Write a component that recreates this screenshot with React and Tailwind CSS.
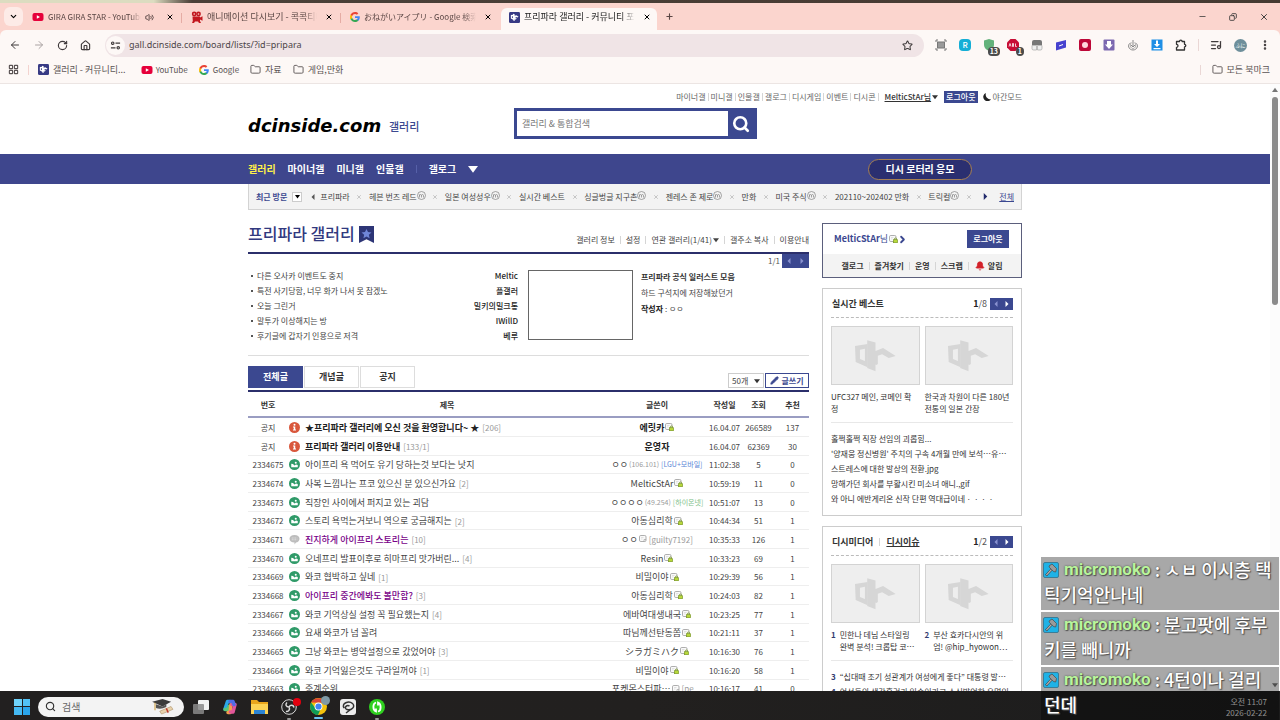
import React from 'react';
import {
  ArrowLeft,
  ArrowRight,
  Bell,
  ChevronDown,
  ChevronRight,
  Copy,
  EllipsisVertical,
  Folder,
  House,
  LayoutGrid,
  ListMusic,
  Minus,
  Pencil,
  Plus,
  RotateCw,
  Search,
  Star,
  Volume2,
  X,
} from 'lucide-react';

/* ---------- data ---------- */

const tabs = [
  { icon: 'youtube', title: 'GIRA GIRA STAR - YouTube', audio: true, latin: true, divider: true },
  { icon: 'camera', title: '애니메이션 다시보기 - 콕콕티비', divider: true },
  { icon: 'google', title: 'おねがいアイプリ - Google 検索', latin: true },
  { icon: 'dc', title: '프리파라 갤러리 - 커뮤니티 포털', active: true },
];

const utilLinks = ['마이너갤', '미니갤', '인물갤', '갤로그', '디시게임', '이벤트', '디시콘'];

const recent = [
  { name: '프리파라' },
  { name: '헤븐 번즈 레드', minor: true },
  { name: '일본 여성성우', minor: true },
  { name: '실시간 베스트' },
  { name: '싱글벙글 지구촌', minor: true },
  { name: '젠레스 존 제로', minor: true },
  { name: '만화' },
  { name: '미국 주식', minor: true },
  { name: '202110~202402 만화' },
  { name: '트릭컬', minor: true },
];

const issues = [
  ['다른 오사카 이벤트도 중지', 'Meltic'],
  ['특전 사기당함, 너무 화가 나서 못 참겠노', '플갤러'],
  ['오늘 그린거', '밀키의밀크통'],
  ['말투가 이상해지는 방', 'IWillD'],
  ['후기글에 갑자기 인용으로 저격', '베루'],
];

const posts = [
  { no: '공지', type: 'notice', title: '★프리파라 갤러리에 오신 것을 환영합니다~ ★', reply: '[206]', writer: '에릿카', badge: 'fixed', date: '16.04.07', views: '266589', up: '137' },
  { no: '공지', type: 'notice', title: '프리파라 갤러리 이용안내', reply: '[133/1]', writer: '운영자', date: '16.04.07', views: '62369', up: '30' },
  { no: '2334675', type: 'pic', title: '아이프리 욕 먹어도 유기 당하는것 보다는 낫지', writer: 'ㅇㅇ', ip: '(106.101)', net: '[LGU+모바일]', netColor: 'text-[#5b86d6]', date: '11:02:38', views: '5', up: '0' },
  { no: '2334674', type: 'pic', title: '사복 느낌나는 프코 있으신 분 있으신가요', reply: '[2]', writer: 'MelticStAr', badge: 'fixed', date: '10:59:19', views: '11', up: '0' },
  { no: '2334673', type: 'pic', title: '직장인 사이에서 퍼지고 있는 괴담', writer: 'ㅇㅇㅇㅇ', ip: '(49.254)', net: '[하이온넷]', netColor: 'text-[#7fbf8c]', date: '10:51:07', views: '13', up: '0' },
  { no: '2334672', type: 'pic', title: '스토리 욕먹는거보니 역으로 궁금해지는', reply: '[2]', writer: '아동심리학', badge: 'fixed', date: '10:44:34', views: '51', up: '1' },
  { no: '2334671', type: 'text', title: '진지하게 아이프리 스토리는', visited: true, reply: '[10]', writer: 'ㅇㅇ', badge: 'plain', ip: '[guilty7192]', date: '10:35:33', views: '126', up: '1' },
  { no: '2334670', type: 'pic', title: '오네프리 발표이후로 히마프리 맛가버린...', reply: '[4]', writer: 'Resin', badge: 'fixed', date: '10:33:23', views: '69', up: '1' },
  { no: '2334669', type: 'pic', title: '와코 협박하고 싶네', reply: '[1]', writer: '비밀이야', badge: 'fixed', date: '10:29:39', views: '56', up: '1' },
  { no: '2334668', type: 'pic', title: '아이프리 중간에봐도 볼만함?', visited: true, reply: '[3]', writer: '아동심리학', badge: 'fixed', date: '10:24:03', views: '82', up: '1' },
  { no: '2334667', type: 'pic', title: '와코 기억상실 설정 꼭 필요했는지', reply: '[4]', writer: '에바여대생내국', badge: 'fixed', date: '10:23:25', views: '77', up: '1' },
  { no: '2334666', type: 'pic', title: '요새 와코가 넘 꼴려', writer: '따님께선탄동쫌', badge: 'fixed', date: '10:21:11', views: '37', up: '1' },
  { no: '2334665', type: 'pic', title: '그냥 와코는 병약설정으로 갔었어야', reply: '[3]', writer: 'シラガミハク', badge: 'fixed', date: '10:16:30', views: '76', up: '1' },
  { no: '2334664', type: 'pic', title: '와코 기억잃은것도 구라일꺼야', reply: '[1]', writer: '비밀이야', badge: 'fixed', date: '10:16:20', views: '58', up: '1' },
  { no: '2334663', type: 'pic', title: '중계순위', writer: '포켓몬스터파⋯', badge: 'plain', ip: '[pe⋯', date: '10:16:17', views: '41', up: '0' },
];

const bestList = [
  '훌쩍훌쩍 직장 선임의 괴롭힘...',
  "'양재웅 정신병원' 주치의 구속 4개월 만에 보석⋯유⋯",
  '스트레스에 대한 발상의 전환.jpg',
  '망해가던 회사를 부활시킨 미소녀 애니.,gif',
  '와 아니 에반게리온 신작 단편 역대급이네ㆍㆍㆍㆍ',
];

const chat = [
  ['ㅅㅂ 이시층 택', '틱기억안나네'],
  ['분고팟에 후부', '키를 빼니까'],
  ['4턴이나 걸리', '던데'],
];

/* ---------- icons ---------- */

const YoutubeIcon = () => (
  <svg viewBox="0 0 12 12" className="size-3 shrink-0">
    <rect x="0.5" y="2" width="11" height="8" rx="2" fill="#e6003a" />
    <path d="M4.8 4.2v3.6L8 6z" fill="#fff" />
  </svg>
);

const GoogleIcon = () => (
  <svg viewBox="0 0 24 24" className="size-[10px] shrink-0">
    <path fill="#4285F4" d="M23.5 12.3c0-.9-.1-1.500-.2-2.300H12v4.500h6.500c-.3 1.500-1.100 2.800-2.400 3.600v3h3.900c2.200-2.100 3.500-5.100 3.500-8.800z" />
    <path fill="#34A853" d="M12 24c3.200 0 6-1.100 8-2.900l-3.900-3c-1.100.7-2.500 1.200-4.100 1.200-3.100 0-5.800-2.100-6.700-5H1.300v3.100C3.300 21.300 7.300 24 12 24z" />
    <path fill="#FBBC05" d="M5.300 14.300c-.5-1.500-.5-3.100 0-4.600V6.600H1.300c-1.700 3.400-1.700 7.400 0 10.800z" />
    <path fill="#EA4335" d="M12 4.800c1.800 0 3.300.6 4.600 1.800L20 3.200C18 1.200 15.200 0 12 0 7.300 0 3.300 2.700 1.300 6.600l4 3.100c.9-2.800 3.600-4.900 6.700-4.900z" />
  </svg>
);

const CameraIcon = () => (
  <svg viewBox="0 0 12 12" className="size-3 shrink-0" fill="#c2181f">
    <circle cx="3.2" cy="3" r="2.4" />
    <circle cx="7.5" cy="3" r="2.4" />
    <path d="M1.500 5.500h7.500v1l2.500-1.300v4.600L9 8.500V10l1 2H8L7 10.500H4L3 12H1l.8-2z" />
    <circle cx="3.2" cy="3" r="0.8" fill="#fbd5ce" />
    <circle cx="7.5" cy="3" r="0.8" fill="#fbd5ce" />
  </svg>
);

const DcIcon = () => (
  <svg viewBox="0 0 12 12" className="size-[11px] shrink-0">
    <rect width="12" height="12" rx="1.5" fill="#373a84" />
    <path
      fillRule="evenodd"
      d="M2 3.400l2.400-.4V2l1.800.4v1.700L8 3.500 10.500 5.300 9 6.100 7.800 5.500l-.7.500v.8L8.700 7.200 7.300 8.300l-1.100-.2V9.800L4.600 9.300V8.500L2 7.200zM3.200 4.700v1.600l1 .5V4.500z"
      fill="#fff"
    />
  </svg>
);

const favicons = { youtube: YoutubeIcon, camera: CameraIcon, google: GoogleIcon, dc: DcIcon };

const TuneIcon = () => (
  <svg viewBox="0 0 12 12" className="size-[11px]" fill="none" stroke="#3f3a3b" strokeWidth="1.3">
    <circle cx="3" cy="3.5" r="1.3" />
    <path d="M6 3.500h5M1 8.500h5" />
    <circle cx="9" cy="8.5" r="1.3" />
  </svg>
);

const PuzzleIcon = () => (
  <svg viewBox="0 0 12 12" className="size-3" fill="none" stroke="#333" strokeWidth="1.3" strokeLinejoin="round">
    <path d="M1.500 2.500H4.500a1.300 1.300 0 0 1 2.600 0H9.500V5.300a1.300 1.300 0 0 1 0 2.600V11H1.500V8.300a1.500 1.500 0 0 0 0-3z" />
  </svg>
);

const MoonIcon = () => (
  <svg viewBox="0 0 8 8" className="size-[8px] shrink-0" fill="#222">
    <path d="M3 0a4.200 4.200 0 1 0 5 6.200A4.600 4.600 0 0 1 3 0z" />
  </svg>
);

const Triangle = ({ dir, className }) => {
  const d = {
    down: 'M0 1.500h8L4 7z',
    left: 'M6 0v8L2 4z',
    right: 'M2 0v8l4-4z',
    up: 'M0 6.500h8L4 1z',
  }[dir];
  return (
    <svg viewBox="0 0 8 8" className={`shrink-0 ${className}`} fill="currentColor">
      <path d={d} />
    </svg>
  );
};

const MinorMark = () => (
  <svg viewBox="0 0 18 18" className="mb-[3px] size-[9px] shrink-0" fill="none" stroke="#777" strokeWidth="1.3">
    <circle cx="9" cy="9" r="8" />
    <path d="M5 13V7m0 2c0-2.500 4-2.500 4 0v4m0-4c0-2.500 4-2.500 4 0v4" />
  </svg>
);

const PostIcon = ({ type }) => {
  if (type === 'notice') {
    return (
      <svg viewBox="0 0 22 22" className="size-[11px] shrink-0">
        <circle cx="11" cy="11" r="11" fill="#d9573c" />
        <circle cx="11" cy="5.5" r="2" fill="#fff" />
        <path d="M8 9h4.500v6H14v2H8v-2h1.500v-4H8z" fill="#fff" />
      </svg>
    );
  }
  if (type === 'text') {
    return (
      <svg viewBox="0 0 22 22" className="size-[11px] shrink-0">
        <path d="M11 2c6 0 10 3 10 7.500S17 17 14 17l-3 4v-4C5 17 1 14 1 9.500S5 2 11 2z" fill="#bdbdbd" />
        <path d="M5.500 8h11M5.500 11.500h11" stroke="#fff" strokeWidth="1.3" strokeDasharray="2 1.5" />
      </svg>
    );
  }
  return (
    <svg viewBox="0 0 22 22" className="size-[11px] shrink-0">
      <circle cx="11" cy="11" r="11" fill="#2f9a68" />
      <path d="M4.500 9.500v7h13v-4.500l-3.500-1-3 2-3-3z" fill="#fff" />
      <circle cx="13.5" cy="7.5" r="2" fill="#fff" />
    </svg>
  );
};

const UserBadge = ({ fixed }) => (
  <svg viewBox="0 0 18 16" className="ml-px h-[8px] w-[9px] shrink-0">
    <rect x="1" y="1" width="13" height="12" rx="2.5" fill="#fafafa" stroke="#999" strokeWidth="1.6" />
    <path d="M4 5h5M4 8h3" stroke="#d0d0d0" strokeWidth="1.2" />
    {fixed ? (
      <>
        <path d="M10.500 10V8.500a2.500 2.500 0 0 1 5 0V10" stroke="#6f8f14" strokeWidth="1.4" fill="none" />
        <rect x="9" y="9.5" width="8" height="6" fill="#b9da3a" stroke="#6b8a16" strokeWidth="1.2" />
      </>
    ) : (
      <path d="M10 13v-4h4" stroke="#999" strokeWidth="1.2" fill="none" />
    )}
  </svg>
);

const DcWatermark = () => (
  <svg viewBox="0 0 124 96" className="h-8 w-[41px]" fill="#d6d6d6">
    <path fillRule="evenodd" d="M0 18l38-6v70L2 66zM15 29v28l15 6V26z" />
    <path d="M37 0l25 7v26l23-9 38 24-21 6-20-11-13 4v25l-4 3-3-1v20l-25-10z" />
  </svg>
);

const HammerIcon = () => (
  <svg viewBox="0 0 16 16" className="size-4 shrink-0">
    <rect x="0.5" y="0.5" width="15" height="15" rx="1.5" fill="#1fb2e6" stroke="#3b7d97" />
    <path d="M3 13.500l6-6.500" stroke="#3c4043" strokeWidth="2.4" />
    <path d="M3.300 13.200L9 7" stroke="#b5b5b5" strokeWidth="1.2" />
    <path d="M6 4l3-2 4.500 4.500-.8 3.500-2-.4L6.500 5.500z" fill="#9a9a9a" stroke="#44484b" strokeWidth="0.7" />
  </svg>
);

/* ---------- browser chrome ---------- */

const TabStrip = () => (
  <div className="flex h-[27px] items-center bg-[#fbd5ce] pl-1 text-[#5a4644]">
    <button aria-label="탭 검색" className="flex size-[19px] items-center justify-center rounded-md bg-[#fdebe7]">
      <ChevronDown className="size-[9px] text-black" strokeWidth={3} />
    </button>
    <div className="flex h-full flex-1 items-end">
      {tabs.map((tab) => {
        const Icon = favicons[tab.icon];
        return (
          <React.Fragment key={tab.title}>
            <div
              className={`ml-px flex h-[22px] w-[156px] items-center gap-1 pb-1 pl-2 pr-[6px] ${
                tab.active ? 'rounded-t-md bg-[#fdf8f6] text-[#222]' : ''
              }`}
            >
              <Icon />
              <span
                className={`flex-1 overflow-hidden whitespace-nowrap leading-[14px] [mask-image:linear-gradient(to_right,black_88%,transparent)] ${
                  tab.latin ? 'text-[8px]' : 'text-[9px]'
                }`}
              >
                {tab.title}
              </span>
              {tab.audio && <Volume2 className="mr-1 size-[9px]" strokeWidth={2.5} />}
              <button aria-label="탭 닫기" className="ml-1">
                <X className="size-[8px] text-black" strokeWidth={3} />
              </button>
            </div>
            <span className={`mb-[7px] ml-px h-[10px] w-px ${tab.divider ? 'bg-[#e5aca4]' : ''}`} />
          </React.Fragment>
        );
      })}
      <button aria-label="새 탭" className="mb-[9px] ml-[6px]">
        <Plus className="size-[9px]" strokeWidth={3} />
      </button>
    </div>
    <div className="flex items-center gap-[22px] pr-[11px] text-[#333]">
      <button aria-label="최소화"><Minus className="size-[9px]" /></button>
      <button aria-label="이전 크기로"><Copy className="size-[8px] -scale-x-100" strokeWidth={2.5} /></button>
      <button aria-label="닫기"><X className="size-[10px]" strokeWidth={2.2} /></button>
    </div>
  </div>
);

const CountBadge = ({ children }) => (
  <span className="absolute -bottom-[5px] -right-[5px] rounded-sm bg-[#4b4b4b] px-[2px] text-[7px] font-bold leading-[9px] text-white">
    {children}
  </span>
);

const Extensions = () => (
  <div className="flex items-center gap-3">
    <svg viewBox="0 0 12 12" className="size-3" fill="none" stroke="#777">
      <path d="M1 3V1h2M9 1h2v2M11 9v2H9M3 11H1V9" />
      <rect x="2.5" y="3" width="7" height="6" fill="#999" />
    </svg>
    <span className="flex size-3 items-center justify-center rounded-sm bg-[#14aed6] text-[8px] font-medium leading-3 text-white">R</span>
    <span className="relative size-3">
      <svg viewBox="0 0 12 12" className="size-3"><path d="M6 0l5 1.500V6c0 3-2.500 5-5 6-2.500-1-5-3-5-6V1.500z" fill="#63b27b" /></svg>
      <CountBadge>13</CountBadge>
    </span>
    <span className="relative size-3">
      <svg viewBox="0 0 12 12" className="size-3">
        <path d="M3.500 0h5L12 3.500v5L8.500 12h-5L0 8.500v-5z" fill="#c70d36" />
        <path d="M2 7.500l1-3 1 3M5.500 4.500v3h1v-3zM8.500 4.500v3h1.200" stroke="#fff" fill="none" strokeWidth="0.8" />
      </svg>
      <CountBadge>1</CountBadge>
    </span>
    <svg viewBox="0 0 12 12" className="size-3">
      <path d="M1 3q0-2 2-2h6q2 0 2 2v3H1z" fill="#777" />
      <path d="M1 6.500h4.500V11H2.500Q1 11 1 9.500zM6.500 6.500H11v3q0 1.500-1.500 1.500h-3z" fill="#eee" stroke="#999" strokeWidth="0.6" />
    </svg>
    <svg viewBox="0 0 12 12" className="size-3">
      <path d="M1 3.500L11 1v7.500L1 11.500z" fill="#4742cf" />
      <path d="M4 7l4-1.500" stroke="#fff" />
    </svg>
    <svg viewBox="0 0 12 12" className="size-3">
      <rect width="12" height="12" rx="2" fill="#bd0838" />
      <circle cx="6" cy="6" r="3" fill="#ffd6dd" />
    </svg>
    <svg viewBox="0 0 12 12" className="size-3">
      <rect x="0.5" y="0.5" width="11" height="11" rx="1" fill="#7c68b0" />
      <path d="M4 2h4v3.500h2L6 10 2 5.500h2z" fill="#fff" />
    </svg>
    <svg viewBox="0 0 12 12" className="size-3" fill="none" stroke="#888">
      <path d="M6 1v7M4 6l2 2 2-2M3.500 4C0 5.500 1.500 11 6 11s6-5.500 2.500-7" />
      <path d="M4.500 3.500C2 6.500 4 9.500 6 9.500s4-3 1.500-6" strokeWidth="0.7" />
    </svg>
    <svg viewBox="0 0 12 12" className="size-3">
      <rect x="0.5" y="0.5" width="11" height="11" fill="#1f8fe5" />
      <path d="M5 1.500h2V5h2L6 8 3 5h2zM2.500 9h7v1.200h-7z" fill="#fff" />
    </svg>
    <PuzzleIcon />
  </div>
);

const Toolbar = () => (
  <div className="bg-[#fbd5ce]">
    <div className="flex h-[30px] items-center rounded-t-md bg-[#fdf8f6] pl-[9px] pr-[9px] text-[#3f3a3b]">
      <div className="flex items-center gap-3">
        <button aria-label="뒤로"><ArrowLeft className="size-3" /></button>
        <button aria-label="앞으로"><ArrowRight className="size-3 text-[#aaa3a3]" /></button>
        <button aria-label="새로고침"><RotateCw className="size-[11px]" strokeWidth={2.5} /></button>
        <button aria-label="홈"><House className="size-[11px]" strokeWidth={2.5} /></button>
      </div>
      <div className="ml-[14px] mr-[11px] flex h-[23px] flex-1 items-center rounded-full bg-[#f0e4e6] pl-px pr-[11px]">
        <button aria-label="사이트 정보" className="flex size-[19px] items-center justify-center rounded-full bg-[#fdf8f6]">
          <TuneIcon />
        </button>
        <input
          aria-label="주소창"
          className="ml-1 min-w-0 flex-1 bg-transparent text-[9px] leading-4 text-[#4c4548] outline-none [font-family:'Noto_Sans','Noto_Sans_CJK_KR',sans-serif]"
          defaultValue="gall.dcinside.com/board/lists/?id=pripara"
        />
        <button aria-label="북마크에 추가"><Star className="size-[11px]" strokeWidth={2.2} /></button>
      </div>
      <Extensions />
      <span className="mx-[11px] h-3 w-px bg-[#ead7d5]" />
      <div className="flex items-center gap-3">
        <ListMusic className="size-3" strokeWidth={2.5} />
        <span className="flex size-[13px] items-center justify-center rounded-full bg-[#6e8f9b] text-[5px] leading-3 text-white">ふに</span>
        <button aria-label="메뉴"><EllipsisVertical className="size-3" strokeWidth={3} /></button>
      </div>
    </div>
  </div>
);

const Bookmarks = () => (
  <div className="flex h-6 items-center border-b border-[#ece5e3] bg-[#fdf8f6] pb-[4px] pl-2 pr-[10px] text-[9px] leading-[14px] text-[#5a5354]">
    <LayoutGrid className="size-[11px]" strokeWidth={2.5} />
    <span className="mx-[9px] h-[10px] w-px bg-[#f3d3cf]" />
    <a href="#" className="flex items-center gap-1"><DcIcon />갤러리 - 커뮤니티...</a>
    <a href="#" className="ml-[15px] flex items-center gap-[3px] text-[8px]"><YoutubeIcon />YouTube</a>
    <a href="#" className="ml-[11px] flex items-center gap-1 text-[8px]"><GoogleIcon />Google</a>
    <a href="#" className="ml-[11px] flex items-center gap-1"><Folder className="size-[11px]" />자료</a>
    <a href="#" className="ml-[11px] flex items-center gap-1"><Folder className="size-[11px]" />게임,만화</a>
    <span className="ml-auto mr-[11px] h-[10px] w-px bg-[#ead7d5]" />
    <a href="#" className="flex items-center gap-1"><Folder className="size-[11px]" />모든 북마크</a>
  </div>
);

/* ---------- gallery page ---------- */

const Bar = () => <span className="h-2 w-px bg-[#d5d5d5]" />;

const PageHeader = () => (
  <header className="mx-auto w-[774px] pb-[15px] pt-[7px]">
    <div className="flex h-3 items-center justify-end gap-[2px] text-[8px] leading-3 text-[#666]">
      {utilLinks.map((link) => (
        <React.Fragment key={link}>
          <a href="#">{link}</a>
          <Bar />
        </React.Fragment>
      ))}
      <a href="#" className="ml-1 flex items-center text-[#333]">
        <u className="font-medium">MelticStAr님</u>
        <Triangle dir="down" className="ml-px size-[6px]" />
      </a>
      <button className="ml-1 bg-[#3b4890] px-[2px] font-medium text-white">로그아웃</button>
      <a href="#" className="ml-[3px] flex items-center gap-[2px]">
        <MoonIcon />
        야간모드
      </a>
    </div>
    <div className="mt-[5px] flex h-[31px] items-center">
      <a href="#" className="w-[141px] whitespace-nowrap pt-1 text-[18px] font-bold italic leading-5 text-black [font-family:'DejaVu_Sans',sans-serif]">
        dcinside.com
      </a>
      <a href="#" className="w-[125px] pt-1 text-[11px] font-medium leading-4 text-[#3b4890]">갤러리</a>
      <form className="flex h-full w-[243px] border-[3px] border-[#3b4890] bg-[#3b4890]">
        <input
          aria-label="갤러리 & 통합검색"
          placeholder="갤러리 & 통합검색"
          className="min-w-0 flex-1 bg-white pl-[5px] text-[9px] leading-4 outline-none placeholder:text-[#777]"
        />
        <button type="button" aria-label="검색" className="flex w-[26px] items-center justify-center text-white">
          <Search className="size-[18px]" strokeWidth={3.5} />
        </button>
      </form>
    </div>
  </header>
);

const NavBar = () => (
  <nav className="bg-[#3e468d]">
    <div className="mx-auto flex h-[30px] w-[774px] items-center gap-3 text-[10px] font-bold leading-4 text-white">
      <a href="#" className="text-[#fff04a]">갤러리</a>
      <a href="#">마이너갤</a>
      <a href="#">미니갤</a>
      <a href="#">인물갤</a>
      <span className="h-2 w-px bg-[#5660a8]" />
      <a href="#">갤로그</a>
      <Triangle dir="down" className="size-[10px]" />
      <a href="#" className="ml-auto mr-[50px] flex h-[21px] w-[104px] items-center justify-center rounded-full border border-[#a67f52] bg-[#2b2f70]">
        디시 로터리 응모
      </a>
    </div>
  </nav>
);

const RecentBar = () => (
  <div className="mx-auto flex h-[26px] w-[774px] items-center border border-t-0 border-[#d3d3d3] bg-[#f3f3f3] px-[7px] text-[8px] leading-3 text-[#444]">
    <strong className="text-[#3b4890]">최근 방문</strong>
    <button aria-label="최근 방문 열기" className="ml-[5px] flex size-[10px] items-center justify-center border border-[#ccc] bg-white text-black">
      <Triangle dir="down" className="size-[5px]" />
    </button>
    <Triangle dir="left" className="ml-2 mr-1 size-[6px] text-[#555]" />
    <div className="flex flex-1 items-center justify-between">
      {recent.map((item) => (
        <React.Fragment key={item.name}>
          <a href="#" className="flex items-center whitespace-nowrap">
            {item.name}
            {item.minor && <MinorMark />}
          </a>
          <X className="size-[6px] text-[#999]" />
        </React.Fragment>
      ))}
    </div>
    <Triangle dir="right" className="mx-[10px] size-[7px] text-[#222a6b]" />
    <a href="#" className="text-[#3b4890] underline">전체</a>
  </div>
);

const Pager = ({ now, total }) => (
  <div className="flex items-center text-[9px] font-normal leading-3 text-[#555]">
    <b className="text-[#222]">{now}</b>/{total}
    <span className="ml-[3px] flex h-3 w-[23px] items-center justify-around bg-[#3b4890]">
      <button aria-label="이전"><Triangle dir="left" className="size-[6px] text-[#8a92d0]" /></button>
      <button aria-label="다음"><Triangle dir="right" className="size-[6px] text-white" /></button>
    </span>
  </div>
);

const GalleryHead = () => (
  <section>
    <div className="flex h-11 items-start justify-between border-b-2 border-[#2b2f6b] pt-[11px]">
      <h1 className="flex items-center gap-1 text-[16px] font-medium leading-6 text-[#31397f]">
        프리파라 갤러리
        <svg viewBox="0 0 16 18" className="mt-[2px] h-[17px] w-[15px]">
          <path d="M0 0h16v18l-8-4-8 4z" fill="#2d3576" />
          <path d="M8 3l1.600 3.400 3.700.4-2.800 2.500.8 3.700L8 11.200 4.700 13l.8-3.700L2.700 6.800l3.700-.4z" fill="#7086d8" />
        </svg>
      </h1>
      <div className="mt-[13px] flex items-center gap-[5px] text-[8px] leading-3 text-[#444]">
        <a href="#">갤러리 정보</a>
        <Bar />
        <a href="#">설정</a>
        <Bar />
        <a href="#" className="flex items-center gap-px">연관 갤러리(1/41)<Triangle dir="down" className="size-[6px]" /></a>
        <Bar />
        <a href="#">갤주소 복사</a>
        <Bar />
        <a href="#">이용안내</a>
      </div>
    </div>
    <div className="flex h-[14px] items-center justify-end gap-[2px] text-[8px] leading-3 text-[#555]">
      1/1
      <span className="flex h-full w-[27px] items-center justify-around bg-[#3b4890] text-[#8a92d0]">
        <button aria-label="이전"><Triangle dir="left" className="size-[6px]" /></button>
        <button aria-label="다음"><Triangle dir="right" className="size-[6px]" /></button>
      </span>
    </div>
    <div className="flex border-b border-[#ddd] pb-3 text-[8px] leading-[15px] text-[#444]">
      <ul className="w-[270px] pl-[3px]">
        {issues.map(([title, writer]) => (
          <li key={title} className="flex items-center">
            <span className="mr-1 size-[2px] bg-[#555]" />
            <a href="#">{title}</a>
            <span className="ml-auto font-medium text-[#222]">{writer}</span>
          </li>
        ))}
      </ul>
      <div className="ml-[10px] mt-[2px] h-[70px] w-[105px] border border-[#666]" />
      <div className="ml-2 mt-px leading-4">
        <p className="font-bold text-[#333]">프리파라 공식 일러스트 모음</p>
        <p>하드 구석지에 저장해놨던거</p>
        <p><b className="text-[#222]">작성자</b> : ㅇㅇ</p>
      </div>
    </div>
  </section>
);

const ListTools = () => (
  <div className="mt-[10px] flex h-[22px] items-end">
    <div className="flex h-full gap-px text-[9px] font-bold text-[#333]">
      <button className="w-[55px] bg-[#3b4890] text-white">전체글</button>
      <button className="w-[55px] border border-[#ddd]">개념글</button>
      <button className="w-[55px] border border-[#ddd]">공지</button>
    </div>
    <div className="relative ml-auto">
      <select
        aria-label="목록 개수"
        className="block h-[15px] w-[36px] appearance-none border border-[#ccc] bg-white pl-[3px] text-[8px] leading-3 text-[#444]"
      >
        <option>50개</option>
      </select>
      <Triangle dir="down" className="pointer-events-none absolute right-1 top-[5px] size-[6px] text-[#333]" />
    </div>
    <button className="ml-px flex h-[15px] w-[44px] items-center justify-center gap-[2px] border border-[#3b4890] text-[8px] font-bold leading-3 text-[#3b4890]">
      <Pencil className="size-[9px] fill-[#3b4890]" />
      글쓰기
    </button>
  </div>
);

const PostTable = () => (
  <table className="mt-[2px] w-full table-fixed border-separate border-spacing-0 border-t-2 border-[#2b2f6b] text-center text-[8px] leading-[17px] text-[#444]">
    <colgroup>
      <col className="w-10" />
      <col />
      <col className="w-[102px]" />
      <col className="w-[33px]" />
      <col className="w-[35px]" />
      <col className="w-[33px]" />
    </colgroup>
    <thead>
      <tr>
        {['번호', '제목', '글쓴이', '작성일', '조회', '추천'].map((head) => (
          <th key={head} className="h-[26px] border-b-2 border-[#9a9dc2] p-0 font-bold text-[#333]">{head}</th>
        ))}
      </tr>
    </thead>
    <tbody>
      {posts.map((post) => {
        const notice = post.type === 'notice';
        return (
          <tr
            key={post.no + post.title}
            className="h-[19px] nth-[3n]:h-[18px] [&>td]:border-b [&>td]:border-[#eee] [&>td]:p-0"
          >
            <td>{post.no}</td>
            <td>
              <div className="flex items-center whitespace-nowrap pl-px text-[9px]">
                <PostIcon type={post.type} />
                <a
                  href="#"
                  className={`ml-[5px] ${notice ? 'font-bold text-[#222]' : ''} ${post.visited ? 'font-medium text-[#770088]' : ''}`}
                >
                  {post.title}
                </a>
                {post.reply && <a href="#" className="ml-[3px] pt-[2px] text-[8px] leading-[14px] text-[#999]">{post.reply}</a>}
              </div>
            </td>
            <td>
              <div className={`flex items-center justify-center whitespace-nowrap text-[9px] ${notice ? 'font-bold text-[#222]' : ''}`}>
                {post.writer}
                {post.badge && <UserBadge fixed={post.badge === 'fixed'} />}
                {post.ip && (
                  <span className={`ml-px text-[#999] ${post.net ? 'text-[7px]' : 'text-[8px]'}`}>{post.ip}</span>
                )}
                {post.net && <span className={`ml-[2px] text-[7px] ${post.netColor}`}>{post.net}</span>}
              </div>
            </td>
            <td>{post.date}</td>
            <td>{post.views}</td>
            <td>{post.up}</td>
          </tr>
        );
      })}
    </tbody>
  </table>
);

const LoginBox = () => (
  <section className="border border-[#5b5f7c] text-[8px] font-bold">
    <div className="flex h-[30px] items-center pl-[11px] pr-3">
      <a href="#" className="flex items-center text-[9px] leading-4 text-[#3b4890]">
        MelticStAr<span className="font-normal">님</span>
        <UserBadge fixed />
        <ChevronRight className="-ml-px size-[11px]" strokeWidth={4} />
      </a>
      <button className="ml-auto h-[18px] w-[42px] bg-[#3b4890] text-white">로그아웃</button>
    </div>
    <div className="flex h-[23px] items-center justify-center gap-[5px] bg-[#f3f3f3] leading-3 text-[#333]">
      <a href="#">갤로그</a>
      <Bar />
      <a href="#">즐겨찾기</a>
      <Bar />
      <a href="#">운영</a>
      <Bar />
      <a href="#">스크랩</a>
      <Bar />
      <a href="#" className="ml-px flex items-center gap-[3px]">
        <Bell className="size-[10px] fill-[#d3222a] text-[#d3222a]" />
        알림
      </a>
    </div>
  </section>
);

const SideBox = ({ head, now, total, cards, children }) => (
  <section className="mt-[10px] border border-[#ccc] px-2 pb-[9px]">
    <div className="flex h-[29px] items-center justify-between border-b border-dashed border-[#bbb] pl-px pt-[2px] text-[9px] font-bold leading-4 text-[#333]">
      {head}
      <Pager now={now} total={total} />
    </div>
    <div className="mt-2 grid grid-cols-2 gap-x-[5px]">
      {cards.map((card) => (
        <a key={card.lines[0]} href="#" className="text-[8px] leading-3 text-[#333]">
          <span className="flex h-[59px] items-center justify-center border border-[#d3d3d3] bg-[#eee]">
            <DcWatermark />
          </span>
          <span className="mt-[6px] flex gap-1 whitespace-nowrap">
            {card.rank && <b className="text-[#333c70]">{card.rank}</b>}
            <span>
              {card.lines[0]}
              <br />
              {card.lines[1]}
            </span>
          </span>
        </a>
      ))}
    </div>
    <ul className="mt-[7px] overflow-hidden whitespace-nowrap border-t border-[#e8e8e8] pt-2 text-[8px] leading-[15px] text-[#333]">
      {children}
    </ul>
  </section>
);

const Aside = () => (
  <aside className="mt-[13px] w-[200px] shrink-0">
    <LoginBox />
    <SideBox
      head={<h2>실시간 베스트</h2>}
      now="1"
      total="8"
      cards={[{ lines: ['UFC327 메인, 코메인 확', '정'] }, { lines: ['한국과 차원이 다른 180년', '전통의 일본 간장'] }]}
    >
      {bestList.map((item) => (
        <li key={item}><a href="#">{item}</a></li>
      ))}
    </SideBox>
    <SideBox
      head={
        <div className="flex items-center gap-[6px]">
          <a href="#">디시미디어</a>
          <Bar />
          <a href="#" className="underline">디시이슈</a>
        </div>
      }
      now="1"
      total="2"
      cards={[
        { rank: '1', lines: ['민한나 데님 스타일링', '완벽 분석! 크롭탑 코⋯'] },
        { rank: '2', lines: ['부산 효카다시안의 위', '엄! @hip_hyowon⋯'] },
      ]}
    >
      <li><b className="mr-1 text-[#333c70]">3</b><a href="#">“십대때 조기 성관계가 여성에게 좋다” 대통령 발⋯</a></li>
      <li><b className="mr-1 text-[#333c70]">4</b><a href="#">여성들의 생각흘려라 일순이라고 소신발언한 유명인</a></li>
    </SideBox>
  </aside>
);

/* ---------- desktop ---------- */

const Scrollbar = () => (
  <div className="flex w-[10px] shrink-0 flex-col items-center bg-[#fcfcfc] py-[3px] text-[#777]">
    <Triangle dir="up" className="size-[6px]" />
    <span className="mt-1 h-[208px] w-[6px] rounded-full bg-[#8b8b8b]" />
    <Triangle dir="down" className="mt-auto size-[6px]" />
  </div>
);

const Taskbar = () => (
  <footer className="flex h-[29px] shrink-0 items-center bg-[#201f1f] bg-linear-to-r from-[#222020] via-[#22201f] to-[#1c1c1c] pl-[14px] pt-[2px]">
    <button aria-label="시작" className="grid size-4 grid-cols-2 gap-px">
      <span className="bg-[#6fd3fb]" />
      <span className="bg-[#52c3f7]" />
      <span className="bg-[#45b9f3]" />
      <span className="bg-[#2aa5ec]" />
    </button>
    <label className="ml-2 flex h-5 w-[146px] items-center rounded-full bg-[#f3f3f3] pl-[7px] pr-2">
      <Search className="size-[11px] text-[#333]" strokeWidth={2.5} />
      <input
        aria-label="검색"
        placeholder="검색"
        className="ml-[6px] min-w-0 flex-1 bg-transparent text-[10px] leading-4 outline-none placeholder:text-[#666]"
      />
      <svg viewBox="0 0 26 18" className="h-[17px] w-[25px]">
        <path d="M1 4l11-3 9 3-9 5z" fill="#3b3b3b" />
        <path d="M5 6.500v4q5 2 11-1v-3l-4 2.500z" fill="#555" />
        <path d="M4 5v8" stroke="#c8952c" />
        <path d="M9 14l12-5 2 3-12 5z" fill="#e9d3ad" stroke="#a98b5c" strokeWidth="0.6" />
        <path d="M16 11l2 4.500" stroke="#c0392b" strokeWidth="1.5" />
      </svg>
    </label>
    <div className="ml-[9px] flex items-center gap-[13px]">
      <svg viewBox="0 0 16 16" className="size-4">
        <rect x="5" y="1" width="11" height="10" rx="1" fill="#f2f2f2" />
        <rect x="0" y="5" width="11" height="10" rx="1" fill="#8a8a8a" fillOpacity="0.85" />
      </svg>
      <svg viewBox="0 0 16 16" className="size-4" strokeWidth="3.5" fill="none" strokeLinecap="round" strokeLinejoin="round">
        <path d="M8 2.500H5.500L3 10h3" stroke="#2ba8e8" />
        <path d="M3 10.500h3L7 7.500" stroke="#5ac77a" />
        <path d="M9 5.500L8 13.500H6" stroke="#f5a04b" />
        <path d="M10 5.500h3L11 13H8.500" stroke="#e2569a" />
        <path d="M8 2.500h3l1 3" stroke="#4f6de6" />
      </svg>
      <svg viewBox="0 0 17 16" className="h-4 w-[17px]">
        <path d="M0 1h6l2 2h9v12H0z" fill="#e9a61c" />
        <path d="M0 5h17v10H0z" fill="#fcd354" />
        <path d="M3 11h11v4H3z" fill="#2b84d4" />
      </svg>
      <span className="relative size-4">
        <svg viewBox="0 0 16 16" className="size-4">
          <circle cx="8" cy="8" r="7.3" fill="#262626" stroke="#d8d8d8" />
          <path d="M8 8C5 8 4 5.500 6 3.500M8 8c1.500-2.600 4.500-2.200 5 .5M8 8c1.500 2.600-.5 4.900-3 4.300" stroke="#ddd" strokeWidth="1.5" fill="none" />
        </svg>
        <span className="absolute -right-1 -top-px size-2 rounded-full bg-[#e3000f]" />
        <span className="absolute -bottom-[5px] left-[6px] h-[2px] w-1 rounded-full bg-[#999]" />
      </span>
      <span className="relative size-[17px]">
        <svg viewBox="0 0 16 16" className="size-[17px]">
          <circle cx="8" cy="8" r="8" fill="#f4c20d" />
          <path d="M1 4.200A8 8 0 0 1 15 4.500H8z" fill="#db4437" />
          <path d="M1 4.200A8 8 0 0 0 7.500 16L10 10.500 5 9.500z" fill="#0f9d58" />
          <circle cx="8" cy="8" r="3.7" fill="#fff" />
          <circle cx="8" cy="8" r="2.9" fill="#4285f4" />
        </svg>
        <span className="absolute -right-[3px] -top-[2px] size-[9px] rounded-full bg-[#7f99a6]" />
        <span className="absolute -bottom-1 left-1 h-[2px] w-[9px] rounded-full bg-[#6cc4f5]" />
      </span>
      <svg viewBox="0 0 16 16" className="size-4">
        <rect width="16" height="16" rx="3" fill="#ececec" />
        <path d="M4 9C1 4 9 1.500 12.500 4.500S11 12 7 10.500 7 5.500 9.500 7M6 14l4-3" stroke="#333" strokeWidth="1.5" fill="none" />
      </svg>
      <span className="relative size-4">
        <svg viewBox="0 0 16 16" className="size-4">
          <circle cx="8" cy="8" r="8" fill="#2fd01f" />
          <path d="M7 3.500C3.500 4.500 3.500 11 7 12.500V9.500M9 12.500c3.500-1 3.500-7.500 0-9v3" stroke="#fff" strokeWidth="1.8" fill="none" />
        </svg>
        <span className="absolute -bottom-[5px] left-[6px] h-[2px] w-1 rounded-full bg-[#999]" />
      </span>
    </div>
    <div className="ml-auto pr-[13px] text-right text-[8px] leading-[11px] text-[#d9d9d9]">
      <p>오전 11:07</p>
      <p>2026-02-22</p>
    </div>
  </footer>
);

const ChatOverlay = () => (
  <ul className="absolute bottom-0 right-px flex w-[238px] flex-col gap-[2px] text-[18px] font-medium leading-[25px] text-white [text-shadow:0_0_2px_#444,1px_1px_1px_#555]">
    {chat.map(([first, second]) => (
      <li key={first} className="h-[53px] whitespace-nowrap bg-black/34 px-[2px]">
        <p className="flex items-center">
          <HammerIcon />
          <span className="ml-[5px] text-[17px] font-bold text-[#b8f59b] [font-family:Roboto,sans-serif]">micromoko</span>
          <span className="ml-1">: {first}</span>
        </p>
        <p className="pl-px">{second}</p>
      </li>
    ))}
  </ul>
);

const App = () => (
  <div className="relative flex h-screen flex-col overflow-hidden bg-white [font-family:'Noto_Sans_CJK_KR','Noto_Sans',sans-serif]">
    <div className="h-[3px] shrink-0 bg-linear-to-r from-[#dcdcc0] from-12% via-[#4b4038] via-15% to-[#453a32]" />
    <TabStrip />
    <Toolbar />
    <Bookmarks />
    <div className="flex min-h-0 flex-1">
      <main className="min-w-0 flex-1 overflow-hidden">
        <PageHeader />
        <NavBar />
        <RecentBar />
        <div className="mx-auto flex w-[774px] gap-[13px]">
          <div className="min-w-0 flex-1">
            <GalleryHead />
            <ListTools />
            <PostTable />
          </div>
          <Aside />
        </div>
      </main>
      <Scrollbar />
    </div>
    <Taskbar />
    <ChatOverlay />
  </div>
);

export default App;
